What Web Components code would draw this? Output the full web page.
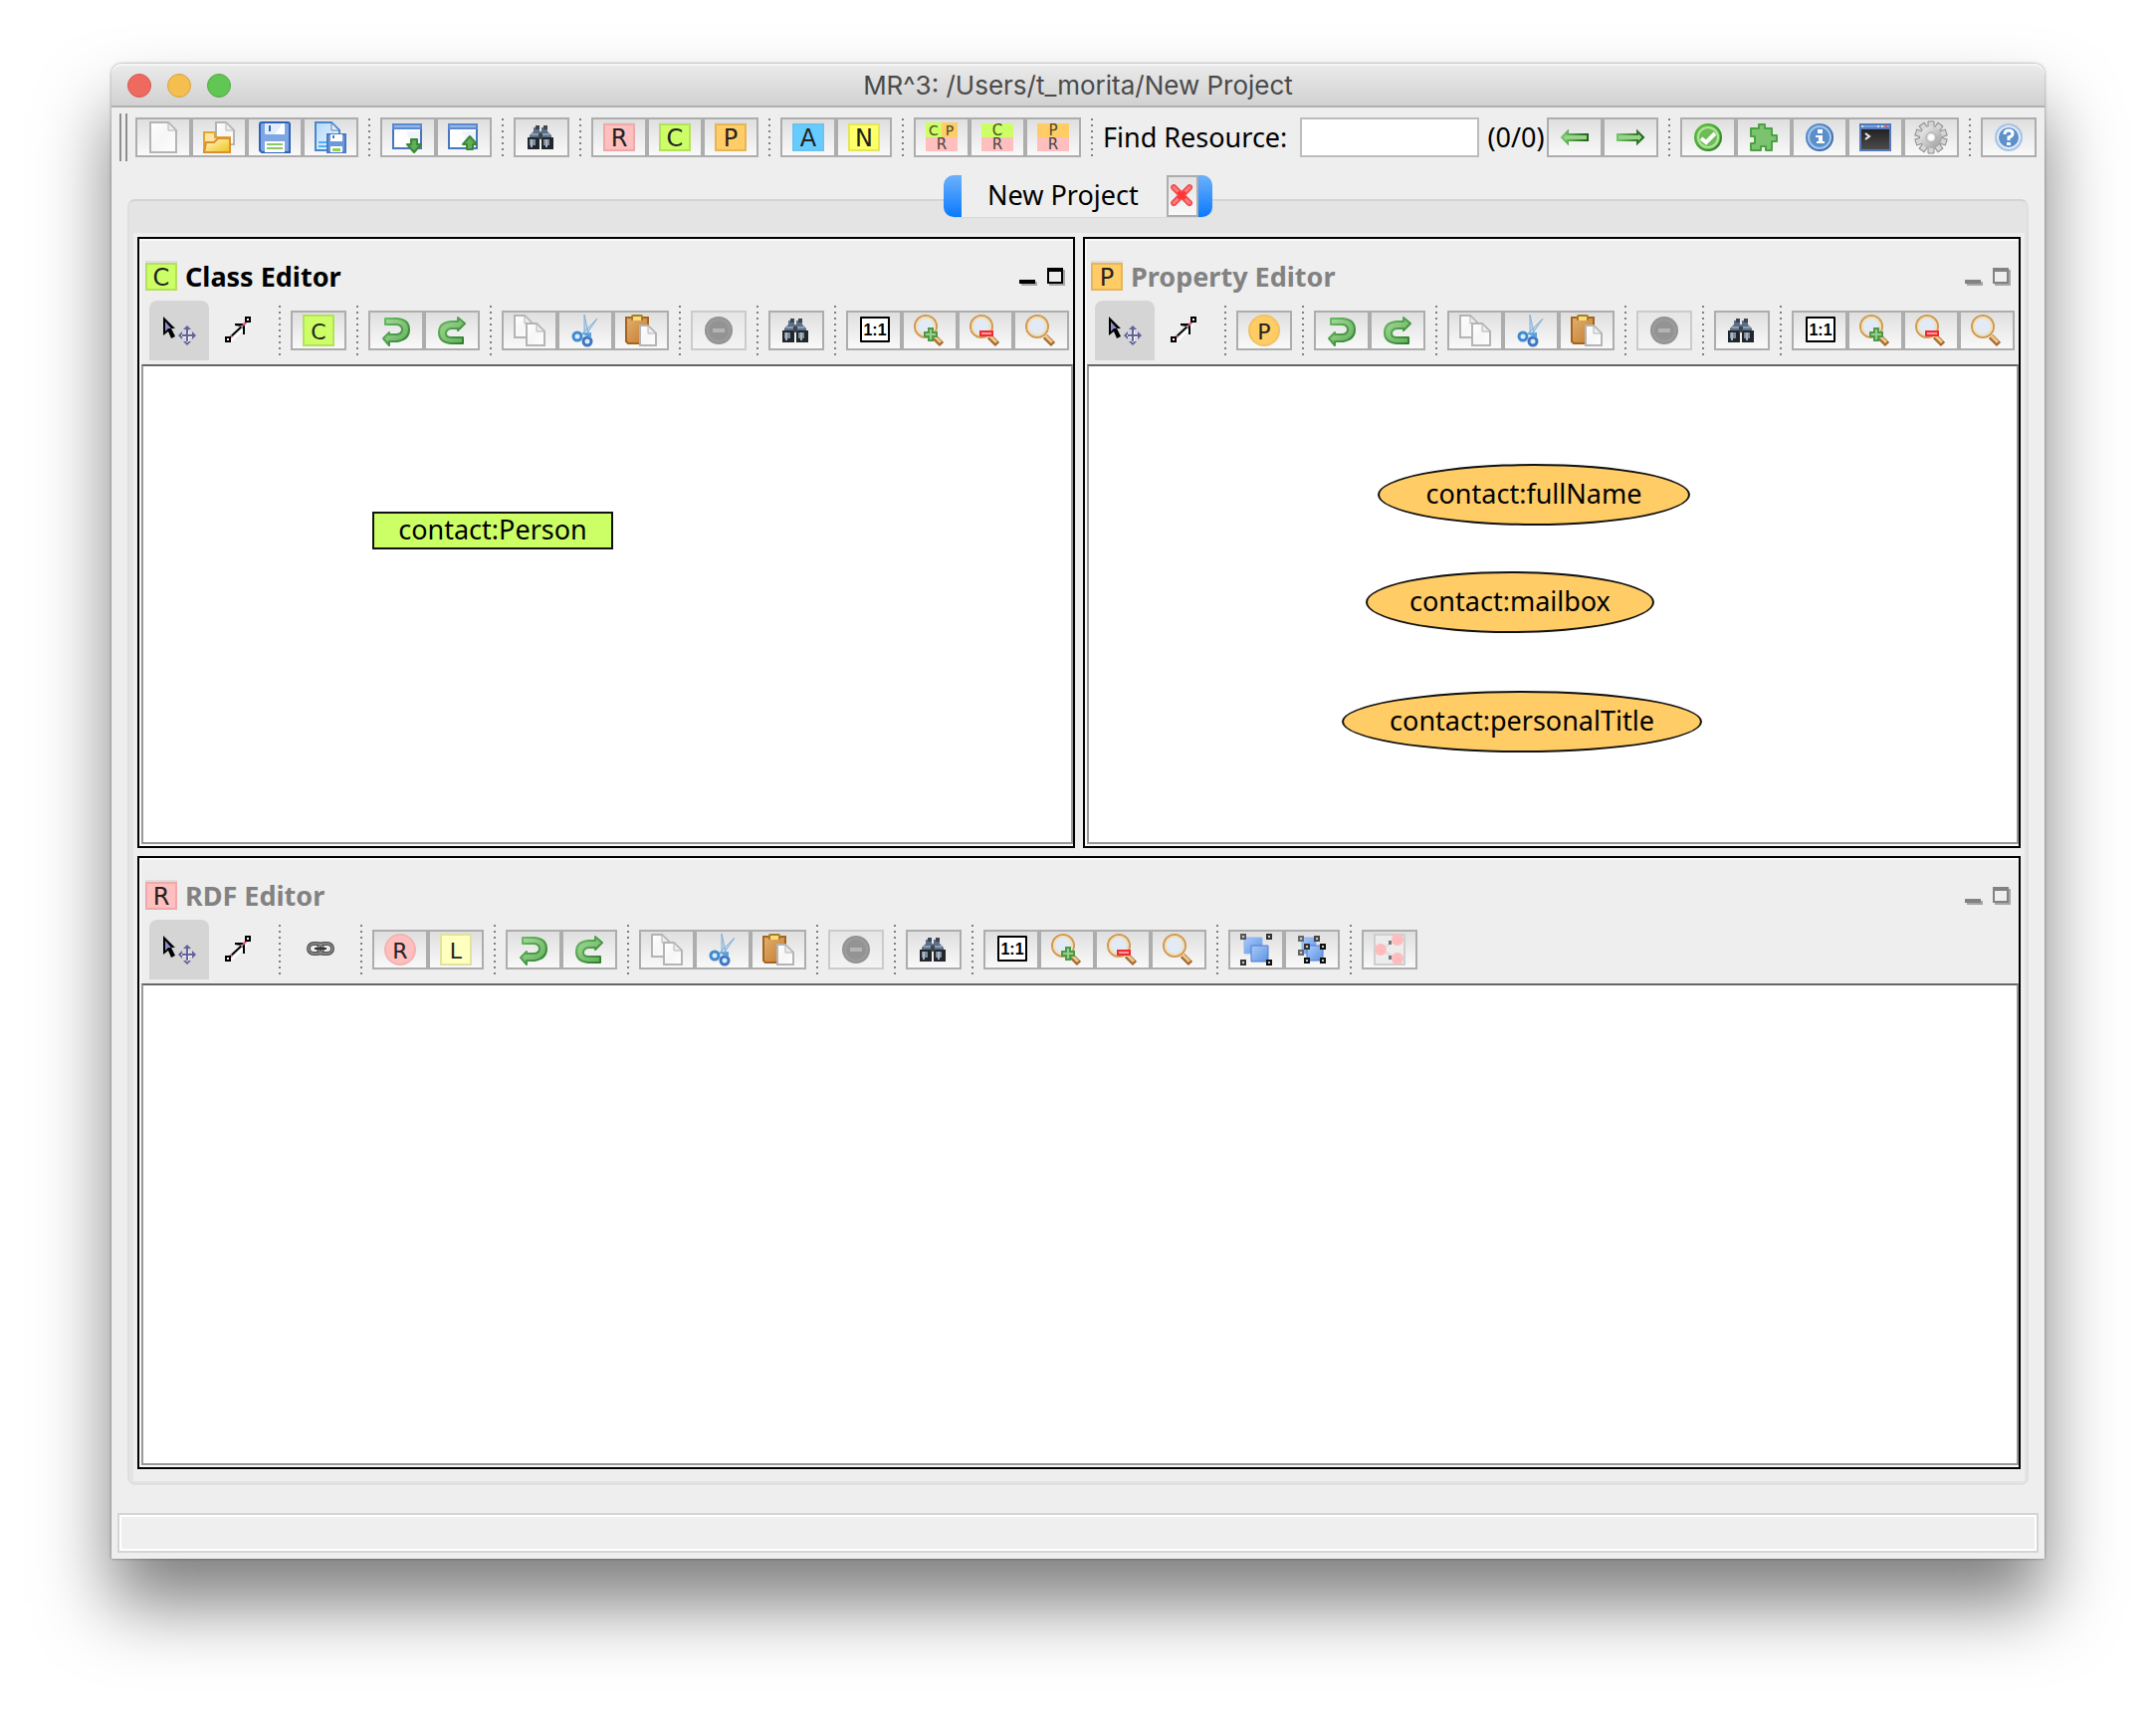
<!DOCTYPE html>
<html lang="en">
<head>
<meta charset="utf-8">
<title>MR^3</title>
<style>
html{background:#fff}
body{margin:0;min-height:100vh;box-sizing:border-box;padding:64px 112px 160px;display:flex;flex-direction:column;font:27px/32px "Noto Sans",sans-serif;color:#000}
app-window{flex:1}
</style>
</head>
<body>
<app-window heading="MR^3: /Users/t_morita/New Project">
  <tool-bar slot="toolbar" grip>
    <tool-button icon="new" label="New"></tool-button><tool-button icon="open" label="Open"></tool-button><tool-button icon="save" label="Save"></tool-button><tool-button icon="saveas" label="Save as"></tool-button>
    <tool-sep></tool-sep>
    <tool-button icon="import" label="Import"></tool-button><tool-button icon="export" label="Export"></tool-button>
    <tool-sep></tool-sep>
    <tool-button icon="find" label="Find"></tool-button>
    <tool-sep></tool-sep>
    <tool-button icon="tileR" label="RDF Editor"></tool-button><tool-button icon="tileC" label="Class Editor"></tool-button><tool-button icon="tileP" label="Property Editor"></tool-button>
    <tool-sep></tool-sep>
    <tool-button icon="tileA" label="Attributes"></tool-button><tool-button icon="tileN" label="Namespaces"></tool-button>
    <tool-sep></tool-sep>
    <tool-button icon="cpr" label="All editors"></tool-button><tool-button icon="cr" label="Class and RDF"></tool-button><tool-button icon="pr" label="Property and RDF"></tool-button>
    <tool-sep></tool-sep>
    <find-box></find-box>
    <tool-button icon="prev" label="Previous"></tool-button><tool-button icon="next" label="Next"></tool-button>
    <tool-sep></tool-sep>
    <tool-button icon="check" label="Validate"></tool-button><tool-button icon="plugin" label="Plugins"></tool-button><tool-button icon="info" label="Info"></tool-button><tool-button icon="term" label="Log console"></tool-button><tool-button icon="gear" label="Options"></tool-button>
    <tool-sep></tool-sep>
    <tool-button icon="help" label="Help"></tool-button>
  </tool-bar>
  <project-tabs heading="New Project">
    <editor-frame heading="Class Editor" icon="tileC" active>
      <tool-bar slot="tools">
        <tool-button toggle pressed icon="move" label="Select"></tool-button><tool-button toggle icon="connect" label="Connect"></tool-button>
        <tool-sep></tool-sep>
        <tool-button icon="addC" label="Insert class"></tool-button>
        <tool-sep></tool-sep>
        <tool-button icon="undo" label="Undo"></tool-button><tool-button icon="redo" label="Redo"></tool-button>
        <tool-sep></tool-sep>
        <tool-button icon="copy" label="Copy"></tool-button><tool-button icon="cut" label="Cut"></tool-button><tool-button icon="paste" label="Paste"></tool-button>
        <tool-sep></tool-sep>
        <tool-button icon="remove" label="Remove" disabled></tool-button>
        <tool-sep></tool-sep>
        <tool-button icon="find" label="Find"></tool-button>
        <tool-sep></tool-sep>
        <tool-button icon="one" label="Actual size"></tool-button><tool-button icon="zoomin" label="Zoom in"></tool-button><tool-button icon="zoomout" label="Zoom out"></tool-button><tool-button icon="zoom" label="Fit window"></tool-button>
      </tool-bar>
      <graph-node kind="class" x="230" y="146" w="242" h="38">contact:Person</graph-node>
    </editor-frame>
    <editor-frame heading="Property Editor" icon="tileP">
      <tool-bar slot="tools">
        <tool-button toggle pressed icon="move" label="Select"></tool-button><tool-button toggle icon="connect" label="Connect"></tool-button>
        <tool-sep></tool-sep>
        <tool-button icon="addP" label="Insert property"></tool-button>
        <tool-sep></tool-sep>
        <tool-button icon="undo" label="Undo"></tool-button><tool-button icon="redo" label="Redo"></tool-button>
        <tool-sep></tool-sep>
        <tool-button icon="copy" label="Copy"></tool-button><tool-button icon="cut" label="Cut"></tool-button><tool-button icon="paste" label="Paste"></tool-button>
        <tool-sep></tool-sep>
        <tool-button icon="remove" label="Remove" disabled></tool-button>
        <tool-sep></tool-sep>
        <tool-button icon="find" label="Find"></tool-button>
        <tool-sep></tool-sep>
        <tool-button icon="one" label="Actual size"></tool-button><tool-button icon="zoomin" label="Zoom in"></tool-button><tool-button icon="zoomout" label="Zoom out"></tool-button><tool-button icon="zoom" label="Fit window"></tool-button>
      </tool-bar>
      <graph-node kind="property" x="290" y="98" w="314" h="62">contact:fullName</graph-node>
      <graph-node kind="property" x="278" y="206" w="290" h="62">contact:mailbox</graph-node>
      <graph-node kind="property" x="254" y="326" w="362" h="62">contact:personalTitle</graph-node>
    </editor-frame>
    <editor-frame heading="RDF Editor" icon="tileR" wide>
      <tool-bar slot="tools">
        <tool-button toggle pressed icon="move" label="Select"></tool-button><tool-button toggle icon="connect" label="Connect"></tool-button>
        <tool-sep></tool-sep>
        <tool-button toggle icon="chain" label="Link"></tool-button>
        <tool-sep></tool-sep>
        <tool-button icon="addR" label="Insert resource"></tool-button><tool-button icon="addL" label="Insert literal"></tool-button>
        <tool-sep></tool-sep>
        <tool-button icon="undo" label="Undo"></tool-button><tool-button icon="redo" label="Redo"></tool-button>
        <tool-sep></tool-sep>
        <tool-button icon="copy" label="Copy"></tool-button><tool-button icon="cut" label="Cut"></tool-button><tool-button icon="paste" label="Paste"></tool-button>
        <tool-sep></tool-sep>
        <tool-button icon="remove" label="Remove" disabled></tool-button>
        <tool-sep></tool-sep>
        <tool-button icon="find" label="Find"></tool-button>
        <tool-sep></tool-sep>
        <tool-button icon="one" label="Actual size"></tool-button><tool-button icon="zoomin" label="Zoom in"></tool-button><tool-button icon="zoomout" label="Zoom out"></tool-button><tool-button icon="zoom" label="Fit window"></tool-button>
        <tool-sep></tool-sep>
        <tool-button icon="group" label="Group"></tool-button><tool-button icon="ungroup" label="Ungroup"></tool-button>
        <tool-sep></tool-sep>
        <tool-button icon="graph" label="Layout"></tool-button>
      </tool-bar>
    </editor-frame>
  </project-tabs>
</app-window>
<script>
const defs = `<defs>
<linearGradient id="paper" x1="0" y1="0" x2="1" y2="1"><stop offset="0" stop-color="#fff"/><stop offset=".5" stop-color="#f6f6f6"/><stop offset="1" stop-color="#fff"/></linearGradient>
<linearGradient id="fold" x1="0" y1="0" x2="1" y2="1"><stop offset="0" stop-color="#fff6d0"/><stop offset="1" stop-color="#efc316"/></linearGradient>
<linearGradient id="sky" x1="0" y1="0" x2="1" y2="1"><stop offset="0" stop-color="#b4d8fb"/><stop offset="1" stop-color="#eef7ff"/></linearGradient>
<linearGradient id="ball" x1="0" y1="0" x2="1" y2="1"><stop offset="0" stop-color="#5b97d2"/><stop offset="1" stop-color="#3560a8"/></linearGradient>
<linearGradient id="green" x1="0" y1="0" x2="1" y2="1"><stop offset="0" stop-color="#a5d99a"/><stop offset="1" stop-color="#5fae58"/></linearGradient>
<linearGradient id="ring" x1="0" y1="0" x2="1" y2="1"><stop offset="0" stop-color="#5cc83c"/><stop offset="1" stop-color="#277a27"/></linearGradient>
<linearGradient id="curl" x1="0" y1="0" x2="1" y2="1"><stop offset="0" stop-color="#6cbd66"/><stop offset="1" stop-color="#2c7c2a"/></linearGradient>
<linearGradient id="arrL" x1="0" y1="0" x2="1" y2="0"><stop offset="0" stop-color="#72c768"/><stop offset="1" stop-color="#1c6418"/></linearGradient>
<linearGradient id="wood" x1="0" y1="0" x2="1" y2="1"><stop offset="0" stop-color="#e2b070"/><stop offset="1" stop-color="#c47a2c"/></linearGradient>
<linearGradient id="steel" x1="0" y1="0" x2="1" y2="1"><stop offset="0" stop-color="#f2f2f2"/><stop offset="1" stop-color="#9a9a9a"/></linearGradient>
<linearGradient id="dark" x1="0" y1="0" x2="0" y2="1"><stop offset="0" stop-color="#222"/><stop offset="1" stop-color="#4c4c4c"/></linearGradient>
<linearGradient id="cube" x1="0" y1="0" x2="1" y2="1"><stop offset="0" stop-color="#a8cbfb"/><stop offset="1" stop-color="#5f92e0"/></linearGradient>
</defs>`;
const letter = (c, x, y, s, f = '#222') => `<text x="${x}" y="${y}" font-size="${s}" text-anchor="middle" font-family="DejaVu Sans, sans-serif" fill="${f}">${c}</text>`;
const tile = (c, f, e) => `<path fill="#ddd" d="M0 0h32v2H0z"/><path fill="${e}" d="M0 2h32v28H0z"/><path fill="${f}" d="M2 4h28v24H2z"/>${letter(c, 16, 25, 24)}`;
const box = (c, f, e) => `<path fill="${e}" d="M0 0h32v32H0z"/><path fill="${f}" d="M2 2h28v28H2z"/>${letter(c, 16, 25, 22)}`;
const disc = (c, f, e) => `<circle cx="16" cy="16" r="15" fill="${f}" stroke="${e}" stroke-width="2"/>${letter(c, 16, 25, 22)}`;
const page = (x, y, w, h, s = '#b4b4b4', f = 'url(#paper)') => `<path d="M${x + 1} ${y + 1}h${w - 10}l8 8v${h - 10}h-${w - 2}z" fill="${f}" stroke="${s}" stroke-width="2"/><path d="M${x + w - 9} ${y + 2}v7h7" fill="#eee" stroke="${s}" stroke-width="1"/>`;
const win = `<path fill="#fff" stroke="#4876bf" stroke-width="2" d="M1 3h28v24H1z"/><path fill="#5b8ad0" d="M0 2h30v6H0z"/><path fill="#93b9ea" d="M2 4h26v2H2z"/><path fill="#e9f1fb" d="M14 10h14v16H20z" opacity=".7"/>`;
const lens = `<path d="M20 22l8 8" stroke="#a9662f" stroke-width="6"/><path d="M20 21l7 7" stroke="#ebc988" stroke-width="3"/><circle cx="12" cy="12" r="11" fill="#e1eaf5" stroke="#d09a50" stroke-width="2"/><circle cx="12" cy="12" r="9" fill="none" stroke="#f2dfba" stroke-width="2"/>`;
const knob = (x, y, c = '#111') => `<path d="M${x + 1} ${y + 1}h4v4h-4z" fill="#ccc" stroke="${c}" stroke-width="2"/>`;
const gearTeeth = Array.from({length: 10}, (_, i) => `<path d="M13 0h6v8h-6z" transform="rotate(${i * 36} 16 16)"/>`).join('');
const R = ['#ffbfbf', '#eeaaaa'], C = ['#ccff66', '#b5e05c'], P = ['#ffcc66', '#e5b659'];
const icons = {
new: page(2, 0, 28, 32),
open: page(12, 0, 20, 24) + `<path d="M1 31V11h11v5h15v15z" fill="#fbe5a4" stroke="#e3a430" stroke-width="2"/><path d="M1 31l2-10h8l4-4h12v14z" fill="url(#fold)" stroke="#dc8f30" stroke-width="2"/>`,
save: `<path d="M1 3q0-2 2-2h26q2 0 2 2v28H3l-2-2z" fill="#7ea6e2" stroke="#2f62b6" stroke-width="2"/><path d="M6 2h20v10q0 1-1 1H7q-1 0-1-1z" fill="#e4edfb"/><path d="M16 13l8-11h2v11z" fill="#fff"/><path d="M10 4h2v6h-2z" fill="#2f62b6"/><path d="M6 20h20v11H6z" fill="#fff"/><path d="M8 22h16v2H8zM8 26h16v2H8z" fill="#8cc866"/>`,
saveas: page(0, 0, 26, 30, '#4a86cc', 'url(#sky)') + `<path d="M4 20h8v2H4zM4 24h8v2H4z" fill="#4ab0ff"/><path d="M13 13h18v18H13z" fill="#6f98d8" stroke="#4a78c4" stroke-width="2"/><path d="M16 13h12v7H16z" fill="#fff"/><path d="M18 14h2v3h-2z" fill="#4a78c4"/><path d="M16 25h12v6H16z" fill="#fff"/><path d="M18 27h8v3h-8z" fill="#93d04e"/>`,
import: win + `<path d="M19 18h6v5h4l-7 8-7-8h4z" fill="#62ad58" stroke="#3b8738" stroke-width="2" stroke-linejoin="round"/>`,
export: win + `<path d="M19 28h6v-5h4l-7-8-7 8h4z" fill="#62ad58" stroke="#3b8738" stroke-width="2" stroke-linejoin="round"/>`,
find: `<path d="M8 6h6v4h2V6h6v4l4 4v2H4v-2l4-4z" fill="#5d6f84"/><path d="M10 4h4v4h-4zM18 4h4v4h-4z" fill="#3b4650"/><path d="M6 12h18v2H6z" fill="#8b9fb6"/><path d="M2 16h12v12H2zM16 16h12v12H16z" fill="#20262c"/><path d="M4 18h6v6H4zM18 18h6v6h-6z" fill="#7f8d9c"/><path d="M5 18h2v8H5zM20 18h2v8h-2z" fill="#a9b6c4"/><path d="M13 12h4v6h-4z" fill="#3b4650"/>`,
tileR: tile('R', ...R), tileC: tile('C', ...C), tileP: tile('P', ...P),
tileA: tile('A', '#66ccff', '#6cc4ee'), tileN: tile('N', '#ffff66', '#e5e55c'),
cpr: `<path fill="#ccff66" d="M0 1h16v15H0z"/><path fill="#ffcc66" d="M16 1h16v15H16z"/><path fill="#ffbfbf" d="M0 16h32v14H0z"/>` + letter('C', 8, 14, 14, '#4a4a2a') + letter('P', 24, 14, 14, '#4a4a2a') + letter('R', 16, 28, 15, '#444'),
cr: `<path fill="#ccff66" d="M0 2h32v14H0z"/><path fill="#ffbfbf" d="M0 16h32v14H0z"/>` + letter('C', 16, 14, 15, '#4a4a2a') + letter('R', 16, 28, 15, '#444'),
pr: `<path fill="#ffcc66" d="M0 2h32v14H0z"/><path fill="#ffbfbf" d="M0 16h32v14H0z"/>` + letter('P', 16, 14, 15, '#4a4a2a') + letter('R', 16, 28, 15, '#444'),
prev: `<path d="M3 16l6-6v3h20v6H9v3z" fill="#9ad28c" stroke="url(#arrL)" stroke-width="2"/>`,
next: `<path d="M29 16l-6-6v3H3v6h20v3z" fill="#9ad28c" stroke="url(#arrL)" stroke-width="2"/>`,
check: `<circle cx="16" cy="16" r="13" fill="#6dbd56" stroke="url(#ring)" stroke-width="2"/><circle cx="16" cy="16" r="10" fill="none" stroke="#b4e39c" stroke-width="2"/><path d="M9 17l5 4 9-9" fill="none" stroke="#fff" stroke-width="4"/>`,
plugin: `<path d="M3 7h8V3h6v4h7v7h5v6h-5v9h-6v-4h-5v4H3v-7h4v-7H3z" fill="#7cc370" stroke="#4aa243" stroke-width="2" stroke-linejoin="round"/>`,
info: `<circle cx="16" cy="16" r="13" fill="#5b8fca" stroke="url(#ball)" stroke-width="2"/><circle cx="16" cy="16" r="11" fill="none" stroke="#a3c6e9" stroke-width="2"/><path d="M14 8h5v4h-5zM12 14h7v6h2v2h-8v-2h2v-4h-3z" fill="#fff"/>`,
term: `<path fill="#5679bb" d="M0 2h32v28H0z"/><path fill="#74a4e6" d="M2 4h28v2H2z"/><path fill="#ddd" d="M2 4h2v2H2zM18 4h2v2h-2zM22 4h2v2h-2z"/><path fill="#ff5a3c" d="M26 4h2v2h-2z"/><path fill="url(#dark)" d="M2 8h28v20H2z"/><path d="M6 12l4 3-4 3" fill="none" stroke="#eee" stroke-width="2"/>`,
gear: `<g fill="#d6d6d6" stroke="#8c8c8c" stroke-width="1">${gearTeeth}</g><circle cx="16" cy="16" r="11" fill="url(#steel)"/><circle cx="16" cy="16" r="5" fill="#ddd" stroke="#aaa" stroke-width="1"/><circle cx="16" cy="16" r="3" fill="#fff"/>`,
help: `<circle cx="16" cy="16" r="13" fill="#5e90ca" stroke="#a9c4e6" stroke-width="2"/><circle cx="16" cy="16" r="11" fill="none" stroke="#e2edf9" stroke-width="2"/><path d="M12 13q0-4 4-4t4 3q0 3-4 4v3" fill="none" stroke="#fff" stroke-width="3"/><path d="M14 21h4v3h-4z" fill="#fff"/>`,
close: `<path d="M6 6l18 18M24 6L6 24" stroke="#f04c50" stroke-width="7" stroke-linecap="round"/><path d="M6 6l18 18M24 6L6 24" stroke="#ff7d7d" stroke-width="3" stroke-linecap="round"/><path d="M11 11l8 8M19 11l-8 8" stroke="#ff3434" stroke-width="4"/>`,
move: `<path d="M0 2l12 12H8l4 8-4 2-3-7-5 4z" fill="#000"/><path d="M2 7l6 7H5l-3 3z" fill="#8c8cd0"/><path d="M19 21h10M24 16v12" stroke="#fff" stroke-width="2" transform="translate(1 1)"/><path d="M23 14h2v6h5v2h-5v6h-2v-6h-5v-2h5zM20 15l4-4 4 4zM20 27l4 4 4-4zM19 17l-4 4 4 4zM29 17l4 4-4 4z" fill="#62629c"/>`,
connect: `<path d="M7 24l16-16" stroke="#fff" stroke-width="2" transform="translate(2 2)"/><path d="M6 24L22 9" stroke="#000" stroke-width="2"/><path d="M12 9h10v11h-2v-6l-2-2-6-1z" fill="#000"/><path d="M17 11h3v4z" fill="#999"/><path d="M6 24l3-3M20 11l4-4" stroke="#ff5577" stroke-width="2"/><path d="M3 23h4v4H3zM23 3h4v4h-4z" fill="#fff" stroke="#000" stroke-width="2"/>`,
chain: `<g fill="none"><rect x="4" y="10" width="14" height="10" rx="5" stroke="#555" stroke-width="4"/><rect x="14" y="10" width="14" height="10" rx="5" stroke="#555" stroke-width="4"/><rect x="4" y="10" width="14" height="10" rx="5" stroke="#aaa" stroke-width="1"/><rect x="14" y="10" width="14" height="10" rx="5" stroke="#aaa" stroke-width="1"/><path d="M10 15h12" stroke="#333" stroke-width="2"/></g>`,
addC: box('C', ...C), addL: box('L', '#ffffbf', '#e2e2a0'), addP: disc('P', '#ffcc66', '#f2c25f'), addR: disc('R', '#ffbfbf', '#f5b2b2'),
undo: `<path d="M5 4h12q12 1 12 11t-12 12H9v4l-6-7 6-6v2h8q5-1 5-5t-5-5H5z" fill="url(#green)" stroke="url(#curl)" stroke-width="2" stroke-linejoin="round"/>`,
redo: `<path d="M27 29H15Q3 28 3 18T15 7h7V3l7 6-7 7v-2h-7q-5 1-5 5t5 4h12z" fill="url(#green)" stroke="url(#curl)" stroke-width="2" stroke-linejoin="round"/>`,
copy: page(0, 0, 20, 24) + page(12, 8, 20, 24),
cut: `<path d="M15 0l4 18-4 2zM28 4L17 20l-4-1z" fill="#bcd7ee" stroke="#82aed4" stroke-width="1"/><circle cx="8" cy="22" r="4" fill="#d9ecfb" stroke="#3f8ad0" stroke-width="3"/><circle cx="18" cy="27" r="4" fill="#d9ecfb" stroke="#3f74c0" stroke-width="3"/><path d="M12 19l10-1v6z" fill="#5b9fdc"/>`,
paste: `<path d="M1 3h22v26H3l-2-2z" fill="url(#wood)" stroke="#a5641c" stroke-width="2"/><path d="M6 2q0-2 2-2h8q2 0 2 2v4H6z" fill="#a87a2a"/><path d="M8 2h8v4H8z" fill="#f7dc78"/>` + page(14, 10, 18, 22),
remove: `<circle cx="16" cy="16" r="14" fill="#939393"/><circle cx="16" cy="16" r="11" fill="none" stroke="#9c9c9c" stroke-width="2"/><path d="M10 14h12v4H10z" fill="#b4b4b4"/>`,
one: `<path d="M3 3h28v24H3z" fill="#fff" stroke="#000" stroke-width="2" stroke-linejoin="round"/><text x="17" y="21" font-size="16" text-anchor="middle" font-family="Liberation Sans, sans-serif" font-weight="bold" fill="#000">1:1</text>`,
zoom: lens,
zoomin: lens + `<path d="M14 13h6v4h4v6h-4v4h-6v-4h-4v-6h4z" fill="#4c9a48"/><path d="M16 15h2v4h4v2h-4v4h-2v-4h-4v-2h4z" fill="#96d08c"/>`,
zoomout: lens + `<path d="M10 16h14v6H10z" fill="#ee2a34"/><path d="M12 18h10v2H12z" fill="#ff9a9a"/>`,
group: `<path fill="url(#cube)" stroke="#8db4ee" d="M4 4h18v16H4z"/><path fill="url(#cube)" stroke="#4c7cd0" d="M11 12h17v16H11z"/>` + knob(0, 0, '#555') + knob(26, 0, '#333') + knob(0, 26, '#333') + knob(26, 26),
ungroup: `<path fill="url(#cube)" stroke="#8db4ee" d="M6 4h14v16H6z"/><path fill="url(#cube)" stroke="#4c7cd0" d="M11 12h16v15H11z"/>` + knob(2, 2, '#666') + knob(18, 2, '#444') + knob(2, 16, '#666') + knob(8, 10, '#333') + knob(24, 10) + knob(8, 24) + knob(24, 24),
graph: `<path d="M1 1h30v30H1z" fill="#ececec" stroke="#cfcfcf" stroke-width="2"/><path d="M6 16L24 6M6 16l18 9" stroke="#ddd" stroke-width="2"/><path d="M15 7h3v4h-3zM15 22h3v4h-3z" fill="#777"/><g fill="#ffbcbc"><circle cx="7" cy="16" r="6"/><circle cx="24" cy="6" r="6"/><circle cx="24" cy="25" r="6"/></g>`
};
const svg = n => `<svg width="32" height="32" viewBox="0 0 32 32" aria-hidden="true">${defs}${icons[n] || ''}</svg>`;

const define = (name, render) => customElements.define(name, class extends HTMLElement {
  connectedCallback() {
    if (this.shadowRoot) return;
    const t = document.createElement('template');
    t.innerHTML = render(this);
    this.attachShadow({mode: 'open'}).append(t.content);
  }
});

define('tool-button', el => `<style>
:host{display:block;flex:none}
button{display:grid;place-items:center;box-sizing:border-box;width:56px;height:40px;padding:0;border:2px solid #adadad;border-radius:0;background:linear-gradient(#dfdfdf,#f9f9f9)}
button:disabled{border-color:#cbcbcb;background:linear-gradient(#e6e6e6,#f3f3f3)}
button.toggle{width:60px;height:60px;border:0;background:none}
button.on{background:#d5d5d5;border-radius:8px 8px 0 0}
svg{display:block;overflow:visible}
</style><button type="button" aria-label="${el.getAttribute('label')}" ${el.hasAttribute('disabled') ? 'disabled' : ''} class="${el.hasAttribute('toggle') ? 'toggle' : ''} ${el.hasAttribute('pressed') ? 'on' : ''}">${svg(el.getAttribute('icon'))}</button>`);

define('tool-sep', () => `<style>
:host{display:block;flex:none;width:2px;height:var(--sep-height,38px);margin:0 10px;background:repeating-linear-gradient(#808080 0 2px,transparent 2px 6px)}
</style>`);

define('tool-bar', el => `<style>
:host{display:flex;align-items:center;--sep-height:${el.hasAttribute('grip') ? '38px' : '50px'}}
.grip{flex:none;box-sizing:border-box;width:8px;height:48px;border:solid #8f8f8f;border-width:0 2px;margin-right:8px}
</style>${el.hasAttribute('grip') ? '<div class="grip"></div>' : ''}<slot></slot>`);

define('find-box', () => `<style>
:host{display:flex;flex:1;min-width:0;align-items:center;white-space:nowrap}
input{flex:1;width:0;min-width:0;box-sizing:border-box;height:40px;margin:0 6px 0 14px;border:2px solid #bcbcbc;border-radius:0;background:#fff;font:inherit;outline:0}
span{flex:none;width:62px;text-align:center}
label{flex:none;width:184px}
</style><label for="q">Find Resource:</label><input id="q" type="text"><span>(0/0)</span>`);

define('app-window', el => `<style>
:host{display:flex;flex-direction:column;background:#eee;border-radius:10px 10px 0 0;box-shadow:0 0 3px rgba(0,0,0,.45),0 46px 72px rgba(0,0,0,.5)}
header{display:grid;grid-template-columns:1fr auto 1fr;align-items:center;box-sizing:border-box;height:44px;padding:2px 16px 0;border-bottom:2px solid #b0b0b0;border-radius:10px 10px 0 0;background:linear-gradient(#ebebeb,#d1d1d1);box-shadow:inset 0 2px #f6f6f6}
.lights{display:flex;gap:16px}
.lights button{width:24px;height:24px;padding:0;border:1px solid var(--rim);border-radius:50%;background:var(--fill)}
.r{--fill:#ee6a5f;--rim:#d5574c}.y{--fill:#f5bf4f;--rim:#d9a13c}.g{--fill:#62c655;--rim:#52a842}
h1{margin:0;font:26px/32px Inter,sans-serif;color:#4a4a4a;white-space:nowrap}
.tools{padding:6px 8px}
.body{flex:1;display:flex;flex-direction:column}
footer{box-sizing:border-box;height:40px;margin:28px 6px 6px;border:2px solid #d4d4d4;box-shadow:inset 0 0 0 2px #fff;background:#efefef}
</style>
<header><div class="lights"><button class="r" aria-label="Close"></button><button class="y" aria-label="Minimize"></button><button class="g" aria-label="Zoom"></button></div><h1>${el.getAttribute('heading')}</h1></header>
<div class="tools"><slot name="toolbar"></slot></div>
<div class="body"><slot></slot></div>
<footer></footer>`);

define('project-tabs', el => `<style>
:host{display:flex;flex:1;flex-direction:column;padding:8px 16px 0}
.strip{display:flex;justify-content:center;margin-bottom:-18px;z-index:1}
.tab{display:flex;height:42px;border-radius:10px;overflow:hidden;background:#eee;box-shadow:0 1px #d8d8d8}
.tab i{width:18px;background:linear-gradient(#6db1fb,#0a7aff)}
.tab i:last-child{width:14px}
.tab button{font:inherit;color:inherit;border:0;padding:0;background:#eee}
.tab .name{width:206px;box-sizing:border-box;padding:0 0 2px 26px;text-align:left;white-space:nowrap}
.tab .x{display:grid;place-items:center;width:32px;box-sizing:border-box;border:2px solid #adadad;overflow:hidden;background:linear-gradient(#e3e3e3,#f9f9f9)}
.x svg{width:28px;height:32px}
.panel{flex:1;display:flex;box-sizing:border-box;border:2px solid #dfdfdf;border-top-color:#d4d4d4;border-radius:8px;background:#e4e4e4;padding:32px 2px 2px 4px}
.grid{flex:1;display:grid;grid-template-columns:1fr 1fr;grid-template-rows:614fr 616fr;gap:8px;padding:4px 4px 12px;background:#eee}
</style>
<div class="strip"><div class="tab"><i></i><button class="name" role="tab" aria-selected="true">${el.getAttribute('heading')}</button><button class="x" aria-label="Close tab">${svg('close')}</button><i></i></div></div>
<div class="panel"><div class="grid"><slot></slot></div></div>`);

define('editor-frame', el => `<style>
:host{display:flex;flex-direction:column;box-sizing:border-box;border:2px solid #000;padding:0 0 2px 2px;box-shadow:inset 2px 2px #f8f8f8,inset 0 -2px #f8f8f8;${el.hasAttribute('wide') ? 'grid-column:1/-1;' : ''}--ink:${el.hasAttribute('active') ? '#000' : '#828282'}}
header{display:flex;align-items:center;height:40px;padding:18px 8px 4px 4px;color:var(--ink)}
h2{flex:1;margin:0 0 0 8px;font:bold 27px/32px "Noto Sans",sans-serif}
header>svg{display:block}
header button{display:block;padding:0;border:0;background:none;margin-left:10px}
.tools{padding:0 0 4px 8px}
.canvas{position:relative;flex:1;min-height:200px;border:2px solid #999;border-top-color:#666;background:#fff}
</style>
<header>${svg(el.getAttribute('icon'))}<h2>${el.getAttribute('heading')}</h2>
<button aria-label="Minimize"><svg width="18" height="18" viewBox="0 0 18 18" style="display:block"><path d="M2 14h16v4H2z" fill="#a6a6a6"/><path d="M0 12h16v4H0z" fill="var(--ink)"/></svg></button>
<button aria-label="Maximize"><svg width="18" height="18" viewBox="0 0 18 18" style="display:block"><path d="M16 2h2v16H2v-2h14z" fill="#a6a6a6"/><path d="M0 0h16v16H0zM2 4v10h12V4z" fill-rule="evenodd" fill="var(--ink)"/></svg></button></header>
<div class="tools"><slot name="tools"></slot></div>
<div class="canvas"><slot></slot></div>`);

define('graph-node', el => {
  const a = n => el.getAttribute(n), prop = a('kind') === 'property';
  return `<style>
:host{position:absolute;display:grid;place-items:center;box-sizing:border-box;padding-bottom:2px;left:${a('x')}px;top:${a('y')}px;width:${a('w')}px;height:${a('h')}px;border:2px solid #111;border-radius:${prop ? '50%' : '0'};background:${prop ? '#ffcc66' : '#ccff66'};white-space:nowrap}
</style><span><slot></slot></span>`;
});
</script>
</body>
</html>
